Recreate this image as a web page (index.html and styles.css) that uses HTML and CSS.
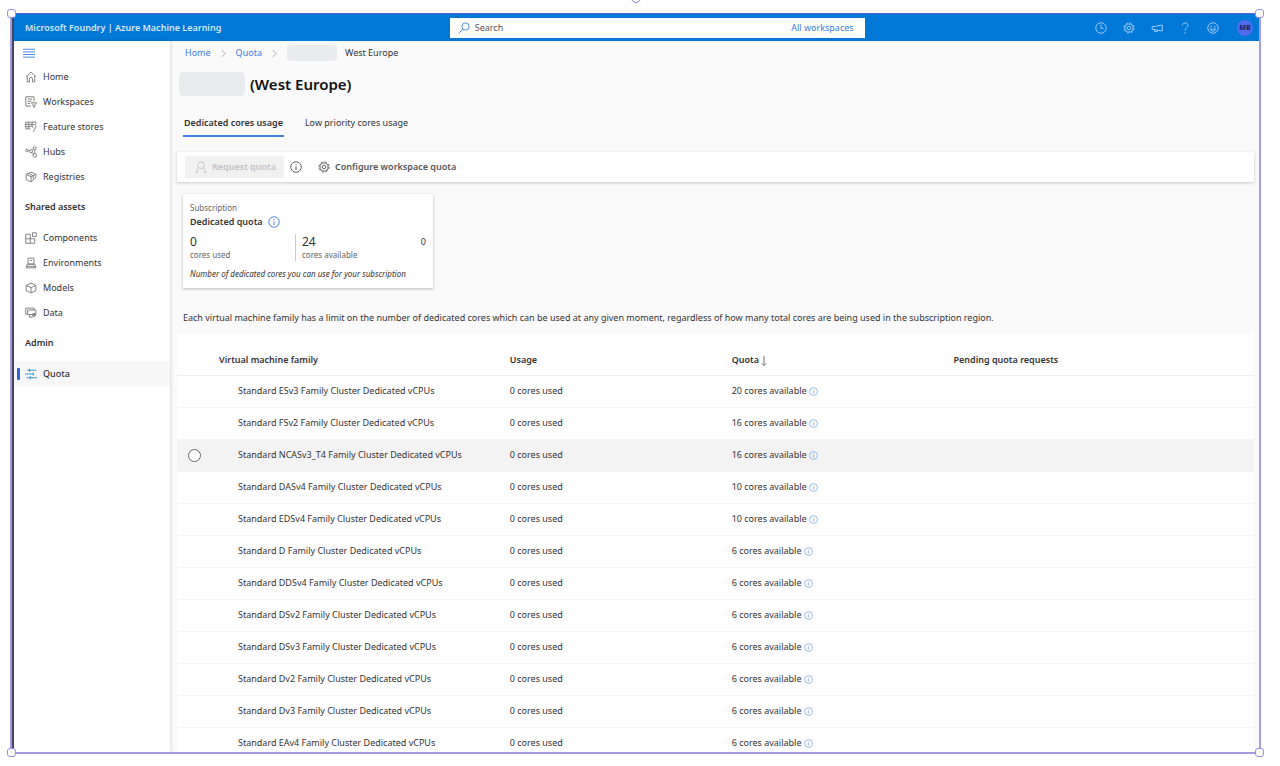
FILE: index.html
```html
<!DOCTYPE html>
<html lang="en">
<head>
    <meta charset="UTF-8">
    <meta name="viewport" content="width=device-width, initial-scale=1.0">
    <title>Quota - Azure Machine Learning</title>
    <link rel="stylesheet" href="styles.css">
</head>
<body>
    <!-- shared icons -->
    <svg class="sprite" aria-hidden="true">
        <symbol id="info" viewBox="0 0 16 16"><circle cx="8" cy="8" r="7"/><path d="M8 7v5M8 4v1.4"/></symbol>
        <symbol id="gear" viewBox="0 0 16 16"><circle cx="8" cy="8" r="2.4"/><circle cx="8" cy="8" r="5.4"/><circle cx="8" cy="8" r="6.8" stroke-dasharray="2.7 2.64"/></symbol>
        <symbol id="chevron" viewBox="0 0 16 16"><path d="M5 2l6 6-6 6"/></symbol>
    </svg>

    <div class="frame">
        <span class="rotate-handle"></span>
        <span class="handle top-left"></span>
        <span class="handle top-right"></span>
        <span class="handle bottom-left"></span>
        <span class="handle bottom-right"></span>

        <div class="app">
            <header class="topbar">
                <div class="brand">Microsoft Foundry | Azure Machine Learning</div>
                <div class="search">
                    <svg class="icon" viewBox="0 0 16 16"><circle cx="10" cy="6" r="4.8"/><path d="M6.5 9.5L1 15"/></svg>
                    <input type="text" placeholder="Search" aria-label="Search">
                    <a href="#">All workspaces</a>
                </div>
                <div class="actions">
                    <button type="button" aria-label="Recent"><svg class="icon" viewBox="0 0 16 16"><circle cx="8" cy="8" r="7"/><path d="M8 3.5V8.5h3.5"/></svg></button>
                    <button type="button" aria-label="Settings"><svg class="icon"><use href="#gear"/></svg></button>
                    <button type="button" aria-label="Announcements"><svg class="icon" viewBox="0 0 16 16"><path d="M15 4v8L1.500 9.500v-3zM4.500 10v2.500l4 .5v-2"/></svg></button>
                    <button type="button" aria-label="Help"><svg class="icon" viewBox="0 0 16 16"><path d="M4.500 4.500C4.500 .2 12 .2 12 4.500 12 7.500 8 7.500 8 11.500M8 13.500v2"/></svg></button>
                    <button type="button" aria-label="Feedback"><svg class="icon" viewBox="0 0 16 16"><circle cx="8" cy="8" r="7"/><path d="M5.500 5v2.500M10.500 5v2.500M4 9.500c1.500 3.600 6.500 3.600 8 0z"/></svg></button>
                    <button type="button" class="avatar">MB</button>
                </div>
            </header>

            <div class="body">
                <nav class="sidebar">
                    <button type="button" class="menu" aria-label="Menu"><svg class="icon" viewBox="0 0 16 16"><path d="M0 3h16M0 6.500h16M0 10h16M0 13.500h16"/></svg></button>
                    <a href="#" class="item"><svg class="icon" viewBox="0 0 16 16"><path d="M1.500 7.500L8 1.500l6.500 6M3 6.500V14.500h3V10c0-2 4-2 4 0v4.500h3v-8"/></svg>Home</a>
                    <a href="#" class="item"><svg class="icon" viewBox="0 0 16 16"><path d="M8 13.500H1V1h11v6M3.500 4h6M3.500 7h5M3.500 10h3M8.500 9h7l-2.500 3v3l-2-1v-2z"/></svg>Workspaces</a>
                    <a href="#" class="item"><svg class="icon" viewBox="0 0 16 16"><path d="M1 1.500h13.500M1 4.500h9M1 7.500h7M1 10.500h6M1 1.500v9M5 1.500v9M9.500 1.500v6M14.500 1.500v3M8.500 6.500c2-3 6-2 6 1s-3 3-3 7M8.500 6.500l3 3"/></svg>Feature stores</a>
                    <a href="#" class="item"><svg class="icon" viewBox="0 0 16 16"><circle cx="2.500" cy="6" r="1.700"/><circle cx="8" cy="7" r="2"/><circle cx="13" cy="3" r="2"/><circle cx="13" cy="12.500" r="2.500"/><path d="M4 6.300h2M9.500 5.700L11.500 4M9.300 8.500l2 2.300M13 5v5"/></svg>Hubs</a>
                    <a href="#" class="item"><svg class="icon" viewBox="0 0 16 16"><path d="M1.500 4.500L8 1.500l6.500 3v4L8 14.500l-6.500-3zM1.500 4.500L8 7.500l6.500-3M8 7.500v7M4.500 3l6.500 3.500v4"/></svg>Registries</a>
                    <h2>Shared assets</h2>
                    <a href="#" class="item"><svg class="icon" viewBox="0 0 16 16"><path d="M1 3h6v12H1zM7 9h6v6H7M1 9h6M10 1h5v5h-5z"/></svg>Components</a>
                    <a href="#" class="item"><svg class="icon" viewBox="0 0 16 16"><path d="M4 1.500h8v8H4zM6.500 4.500h3M3 9.500h10l1.500 5h-13zM1.500 12.500h13"/></svg>Environments</a>
                    <a href="#" class="item"><svg class="icon" viewBox="0 0 16 16"><path d="M1.500 4.500L8 1.500l6.500 3v7L8 14.500l-6.500-3zM1.500 4.500L8 7.500l6.500-3M8 7.500v7"/></svg>Models</a>
                    <a href="#" class="item"><svg class="icon" viewBox="0 0 16 16"><path d="M3 9.500H1v-8h11v3M3.500 4h11v6h-11zM6 10v3.500h4l4.500-4.500"/><circle cx="12" cy="10.500" r="2"/></svg>Data</a>
                    <h2>Admin</h2>
                    <a href="#" class="item active"><svg class="icon" viewBox="0 0 16 16"><path d="M3 3h12M0 8h11M2 13h14M6 1v4M11 6v4M7 11v4"/></svg>Quota</a>
                </nav>

                <main>
                    <div class="breadcrumb">
                        <a href="#">Home</a>
                        <svg class="icon small"><use href="#chevron"/></svg>
                        <a href="#">Quota</a>
                        <svg class="icon small"><use href="#chevron"/></svg>
                        <span class="mask"></span>
                        <span>West Europe</span>
                    </div>
                    <div class="title">
                        <span class="mask"></span>
                        <h1>(West Europe)</h1>
                    </div>
                    <div class="tabs">
                        <button type="button" class="tab selected">Dedicated cores usage</button>
                        <button type="button" class="tab">Low priority cores usage</button>
                    </div>
                    <div class="toolbar">
                        <button type="button" class="request" disabled><svg class="icon" viewBox="0 0 16 16"><circle cx="8" cy="5.500" r="4.500"/><path d="M4.500 9L2 15M11.500 9l2.500 6M1 15h3M12 15h3"/></svg>Request quota</button>
                        <svg class="icon"><use href="#info"/></svg>
                        <button type="button" class="configure"><svg class="icon"><use href="#gear"/></svg>Configure workspace quota</button>
                    </div>

                    <section class="card">
                        <div class="card-label">Subscription</div>
                        <div class="card-title">Dedicated quota <svg class="icon"><use href="#info"/></svg></div>
                        <div class="stats">
                            <div class="stat"><strong>0</strong><span>cores used</span></div>
                            <div class="stat"><strong>24</strong><span>cores available</span></div>
                            <div class="count">0</div>
                        </div>
                        <div class="note">Number of dedicated cores you can use for your subscription</div>
                    </section>

                    <p>Each virtual machine family has a limit on the number of dedicated cores which can be used at any given moment, regardless of how many total cores are being used in the subscription region.</p>

                    <table>
                        <thead>
                            <tr>
                                <th class="col-select"></th>
                                <th class="col-family">Virtual machine family</th>
                                <th class="col-usage">Usage</th>
                                <th class="col-quota">Quota <svg class="icon sort" viewBox="0 0 8 16"><path d="M4 1v13M1 11l3 3 3-3"/></svg></th>
                                <th>Pending quota requests</th>
                            </tr>
                        </thead>
                        <tbody>
                            <tr><td></td><td>Standard ESv3 Family Cluster Dedicated vCPUs</td><td>0 cores used</td><td>20 cores available <svg class="icon small"><use href="#info"/></svg></td><td></td></tr>
                            <tr><td></td><td>Standard FSv2 Family Cluster Dedicated vCPUs</td><td>0 cores used</td><td>16 cores available <svg class="icon small"><use href="#info"/></svg></td><td></td></tr>
                            <tr class="hovered"><td><input type="radio" name="family" aria-label="Select Standard NCASv3_T4"></td><td>Standard NCASv3_T4 Family Cluster Dedicated vCPUs</td><td>0 cores used</td><td>16 cores available <svg class="icon small"><use href="#info"/></svg></td><td></td></tr>
                            <tr><td></td><td>Standard DASv4 Family Cluster Dedicated vCPUs</td><td>0 cores used</td><td>10 cores available <svg class="icon small"><use href="#info"/></svg></td><td></td></tr>
                            <tr><td></td><td>Standard EDSv4 Family Cluster Dedicated vCPUs</td><td>0 cores used</td><td>10 cores available <svg class="icon small"><use href="#info"/></svg></td><td></td></tr>
                            <tr><td></td><td>Standard D Family Cluster Dedicated vCPUs</td><td>0 cores used</td><td>6 cores available <svg class="icon small"><use href="#info"/></svg></td><td></td></tr>
                            <tr><td></td><td>Standard DDSv4 Family Cluster Dedicated vCPUs</td><td>0 cores used</td><td>6 cores available <svg class="icon small"><use href="#info"/></svg></td><td></td></tr>
                            <tr><td></td><td>Standard DSv2 Family Cluster Dedicated vCPUs</td><td>0 cores used</td><td>6 cores available <svg class="icon small"><use href="#info"/></svg></td><td></td></tr>
                            <tr><td></td><td>Standard DSv3 Family Cluster Dedicated vCPUs</td><td>0 cores used</td><td>6 cores available <svg class="icon small"><use href="#info"/></svg></td><td></td></tr>
                            <tr><td></td><td>Standard Dv2 Family Cluster Dedicated vCPUs</td><td>0 cores used</td><td>6 cores available <svg class="icon small"><use href="#info"/></svg></td><td></td></tr>
                            <tr><td></td><td>Standard Dv3 Family Cluster Dedicated vCPUs</td><td>0 cores used</td><td>6 cores available <svg class="icon small"><use href="#info"/></svg></td><td></td></tr>
                            <tr><td></td><td>Standard EAv4 Family Cluster Dedicated vCPUs</td><td>0 cores used</td><td>6 cores available <svg class="icon small"><use href="#info"/></svg></td><td></td></tr>
                        </tbody>
                    </table>
                </main>
            </div>
        </div>
    </div>
</body>
</html>
```

FILE: styles.css
```css
* {
    box-sizing: border-box;
    margin: 0;
    padding: 0;
}

body {
    height: 100vh;
    padding: 13px 19px 12px 10px;
    overflow: hidden;
    background-color: white;
    color: #333;
    font-family: "Noto Sans", "Open Sans", sans-serif;
    font-size: 9px;
    line-height: 12px;
}

a {
    color: #3b7de0;
    text-decoration: none;
}

button {
    border: none;
    background: none;
    color: inherit;
    font: inherit;
    cursor: pointer;
}

.sprite {
    position: absolute;
    width: 0;
    height: 0;
}

.icon {
    width: 12px;
    height: 12px;
    flex: none;
    fill: none;
    stroke: currentColor;
    stroke-width: 1.2;
    vertical-align: middle;
}

.icon.small {
    width: 9px;
    height: 9px;
}

/* selection frame around the window */
.frame {
    position: relative;
    height: 100%;
    border: 2px solid #a59be6;
    border-top: 1px solid #5b62d6;
}

.handle {
    position: absolute;
    width: 9px;
    height: 9px;
    border: 1px solid #9a8fe6;
    border-radius: 3px;
    background-color: white;
    z-index: 1;
}

.top-left {
    top: -5px;
    left: -5px;
}

.top-right {
    top: -5px;
    right: -5px;
}

.bottom-left {
    bottom: -5px;
    left: -5px;
}

.bottom-right {
    bottom: -5px;
    right: -5px;
}

.rotate-handle {
    position: absolute;
    top: -21px;
    left: 50%;
    width: 10px;
    height: 10px;
    margin-left: -5px;
    border: 1px solid #8a7fe0;
    border-radius: 50%;
}

.app {
    display: flex;
    flex-direction: column;
    height: 100%;
    overflow: hidden;
    border-left: 2px solid #44415c;
}

.topbar {
    display: grid;
    grid-template-columns: 35% 1fr 32%;
    align-items: center;
    flex: none;
    height: 27px;
    background-color: #0078d7;
    color: #d5eaff;
}

.brand {
    padding-left: 11px;
    font-weight: 600;
}

.search {
    display: flex;
    align-items: center;
    gap: 5px;
    height: 20px;
    margin-right: -4px;
    padding: 0 11px 0 8px;
    background-color: white;
    color: #3b7de0;
}

.search input {
    flex: 1;
    min-width: 0;
    border: none;
    outline: none;
    font: inherit;
}

.search input::placeholder {
    color: #555;
}

.actions {
    display: flex;
    justify-content: flex-end;
    align-items: center;
    gap: 16px;
    padding-right: 6px;
    color: #a9d4fb;
}

.actions button {
    display: flex;
}

.actions .avatar {
    justify-content: center;
    align-items: center;
    width: 16px;
    height: 16px;
    margin-left: 2px;
    border-radius: 50%;
    background-color: #4f6bed;
    color: #14215c;
    font-size: 7px;
    font-weight: 700;
}

.body {
    display: flex;
    flex: 1;
    min-height: 0;
}

.sidebar {
    position: relative;
    flex: none;
    width: 156px;
    background-color: white;
    box-shadow: 0 0 4px rgba(0, 0, 0, 0.2);
}

.menu {
    display: flex;
    align-items: center;
    height: 23px;
    padding-left: 9px;
    color: #3b7de0;
}

.item {
    display: flex;
    align-items: center;
    gap: 6px;
    height: 25px;
    padding-left: 11px;
    color: #333;
}

.item .icon {
    color: #777;
}

.item.active {
    padding-left: 3px;
    background-color: #f7f7f7;
    font-weight: 500;
}

.item.active::before {
    content: "";
    width: 3px;
    height: 12px;
    margin-right: -1px;
    border-radius: 1px;
    background-color: #2a66dd;
}

.item.active .icon {
    color: #2b88c8;
}

.sidebar h2 {
    padding: 12px 11px;
    font-size: 9px;
    font-weight: 600;
}

main {
    flex: 1;
    min-width: 0;
    padding: 0 5px 0 7px;
    background-color: #fafafa;
}

.breadcrumb {
    display: flex;
    align-items: center;
    gap: 8px;
    height: 24px;
    padding-left: 8px;
}

.breadcrumb .icon {
    color: #888;
}

.mask {
    width: 50px;
    height: 16px;
    border-radius: 4px;
    background-color: #e9ebee;
}

.title {
    display: flex;
    align-items: center;
    gap: 5px;
    height: 37px;
    padding-left: 2px;
}

.title .mask {
    width: 66px;
    height: 24px;
}

h1 {
    color: #111;
    font-size: 15px;
    font-weight: 600;
}

.tabs {
    display: flex;
    gap: 20px;
    height: 35px;
    padding-left: 6px;
}

.tab {
    padding: 8px 1px 0;
    border-bottom: 2px solid transparent;
}

.tab.selected {
    border-color: #4583e4;
    font-weight: 600;
}

.toolbar {
    display: flex;
    align-items: center;
    gap: 6px;
    height: 30px;
    margin-top: 15px;
    padding-left: 8px;
    background-color: white;
    box-shadow: 0 1px 3px rgba(0, 0, 0, 0.2);
    color: #555;
}

.toolbar button {
    display: flex;
    align-items: center;
    gap: 5px;
    height: 22px;
    font-weight: 600;
}

.toolbar .request {
    padding: 0 8px 0 10px;
    background-color: #f1f1f1;
    color: #c4c4c4;
}

.toolbar .configure {
    margin-left: 10px;
}

.card {
    width: 250px;
    margin: 12px 6px 24px;
    padding: 8px 7px;
    background-color: white;
    box-shadow: 0 1px 3px rgba(0, 0, 0, 0.25);
}

.card-label,
.stat span {
    color: #666;
    font-size: 8px;
}

.card-title {
    display: flex;
    align-items: center;
    gap: 5px;
    height: 16px;
    font-weight: 600;
}

.card-title .icon {
    color: #3b7de0;
}

.stats {
    display: flex;
    gap: 5px;
    margin: 4px 0 7px;
}

.stat {
    display: flex;
    flex-direction: column;
    width: 100px;
    height: 27px;
}

.stat + .stat {
    padding-left: 6px;
    border-left: 1px solid #ccc;
}

.stat strong {
    font-size: 12px;
    font-weight: 400;
    line-height: 15px;
}

.count {
    margin-left: auto;
    line-height: 15px;
}

.note {
    font-size: 8px;
    font-style: italic;
}

p {
    padding-left: 6px;
}

table {
    width: 100%;
    margin-top: 10px;
    border-collapse: collapse;
    table-layout: fixed;
    background-color: white;
}

th {
    height: 41px;
    padding-top: 12px;
    color: #333;
    font-weight: 600;
    text-align: left;
    border-bottom: 1px solid #eee;
}

td {
    height: 32px;
    border-bottom: 1px solid #f5f5f5;
    white-space: nowrap;
}

td:nth-child(2) {
    padding-left: 19px;
}

td .icon {
    color: #6a9de8;
    vertical-align: -2px;
}

.col-select {
    width: 42px;
}

.col-family {
    width: 27%;
}

.col-usage,
.col-quota {
    width: 20.6%;
}

.icon.sort {
    width: 6px;
    color: #666;
}

.hovered {
    background-color: #f3f3f3;
}

input[type="radio"] {
    display: block;
    width: 13px;
    height: 13px;
    margin-left: 11px;
    border: 1px solid #666;
    border-radius: 50%;
    background-color: white;
    appearance: none;
}
```
